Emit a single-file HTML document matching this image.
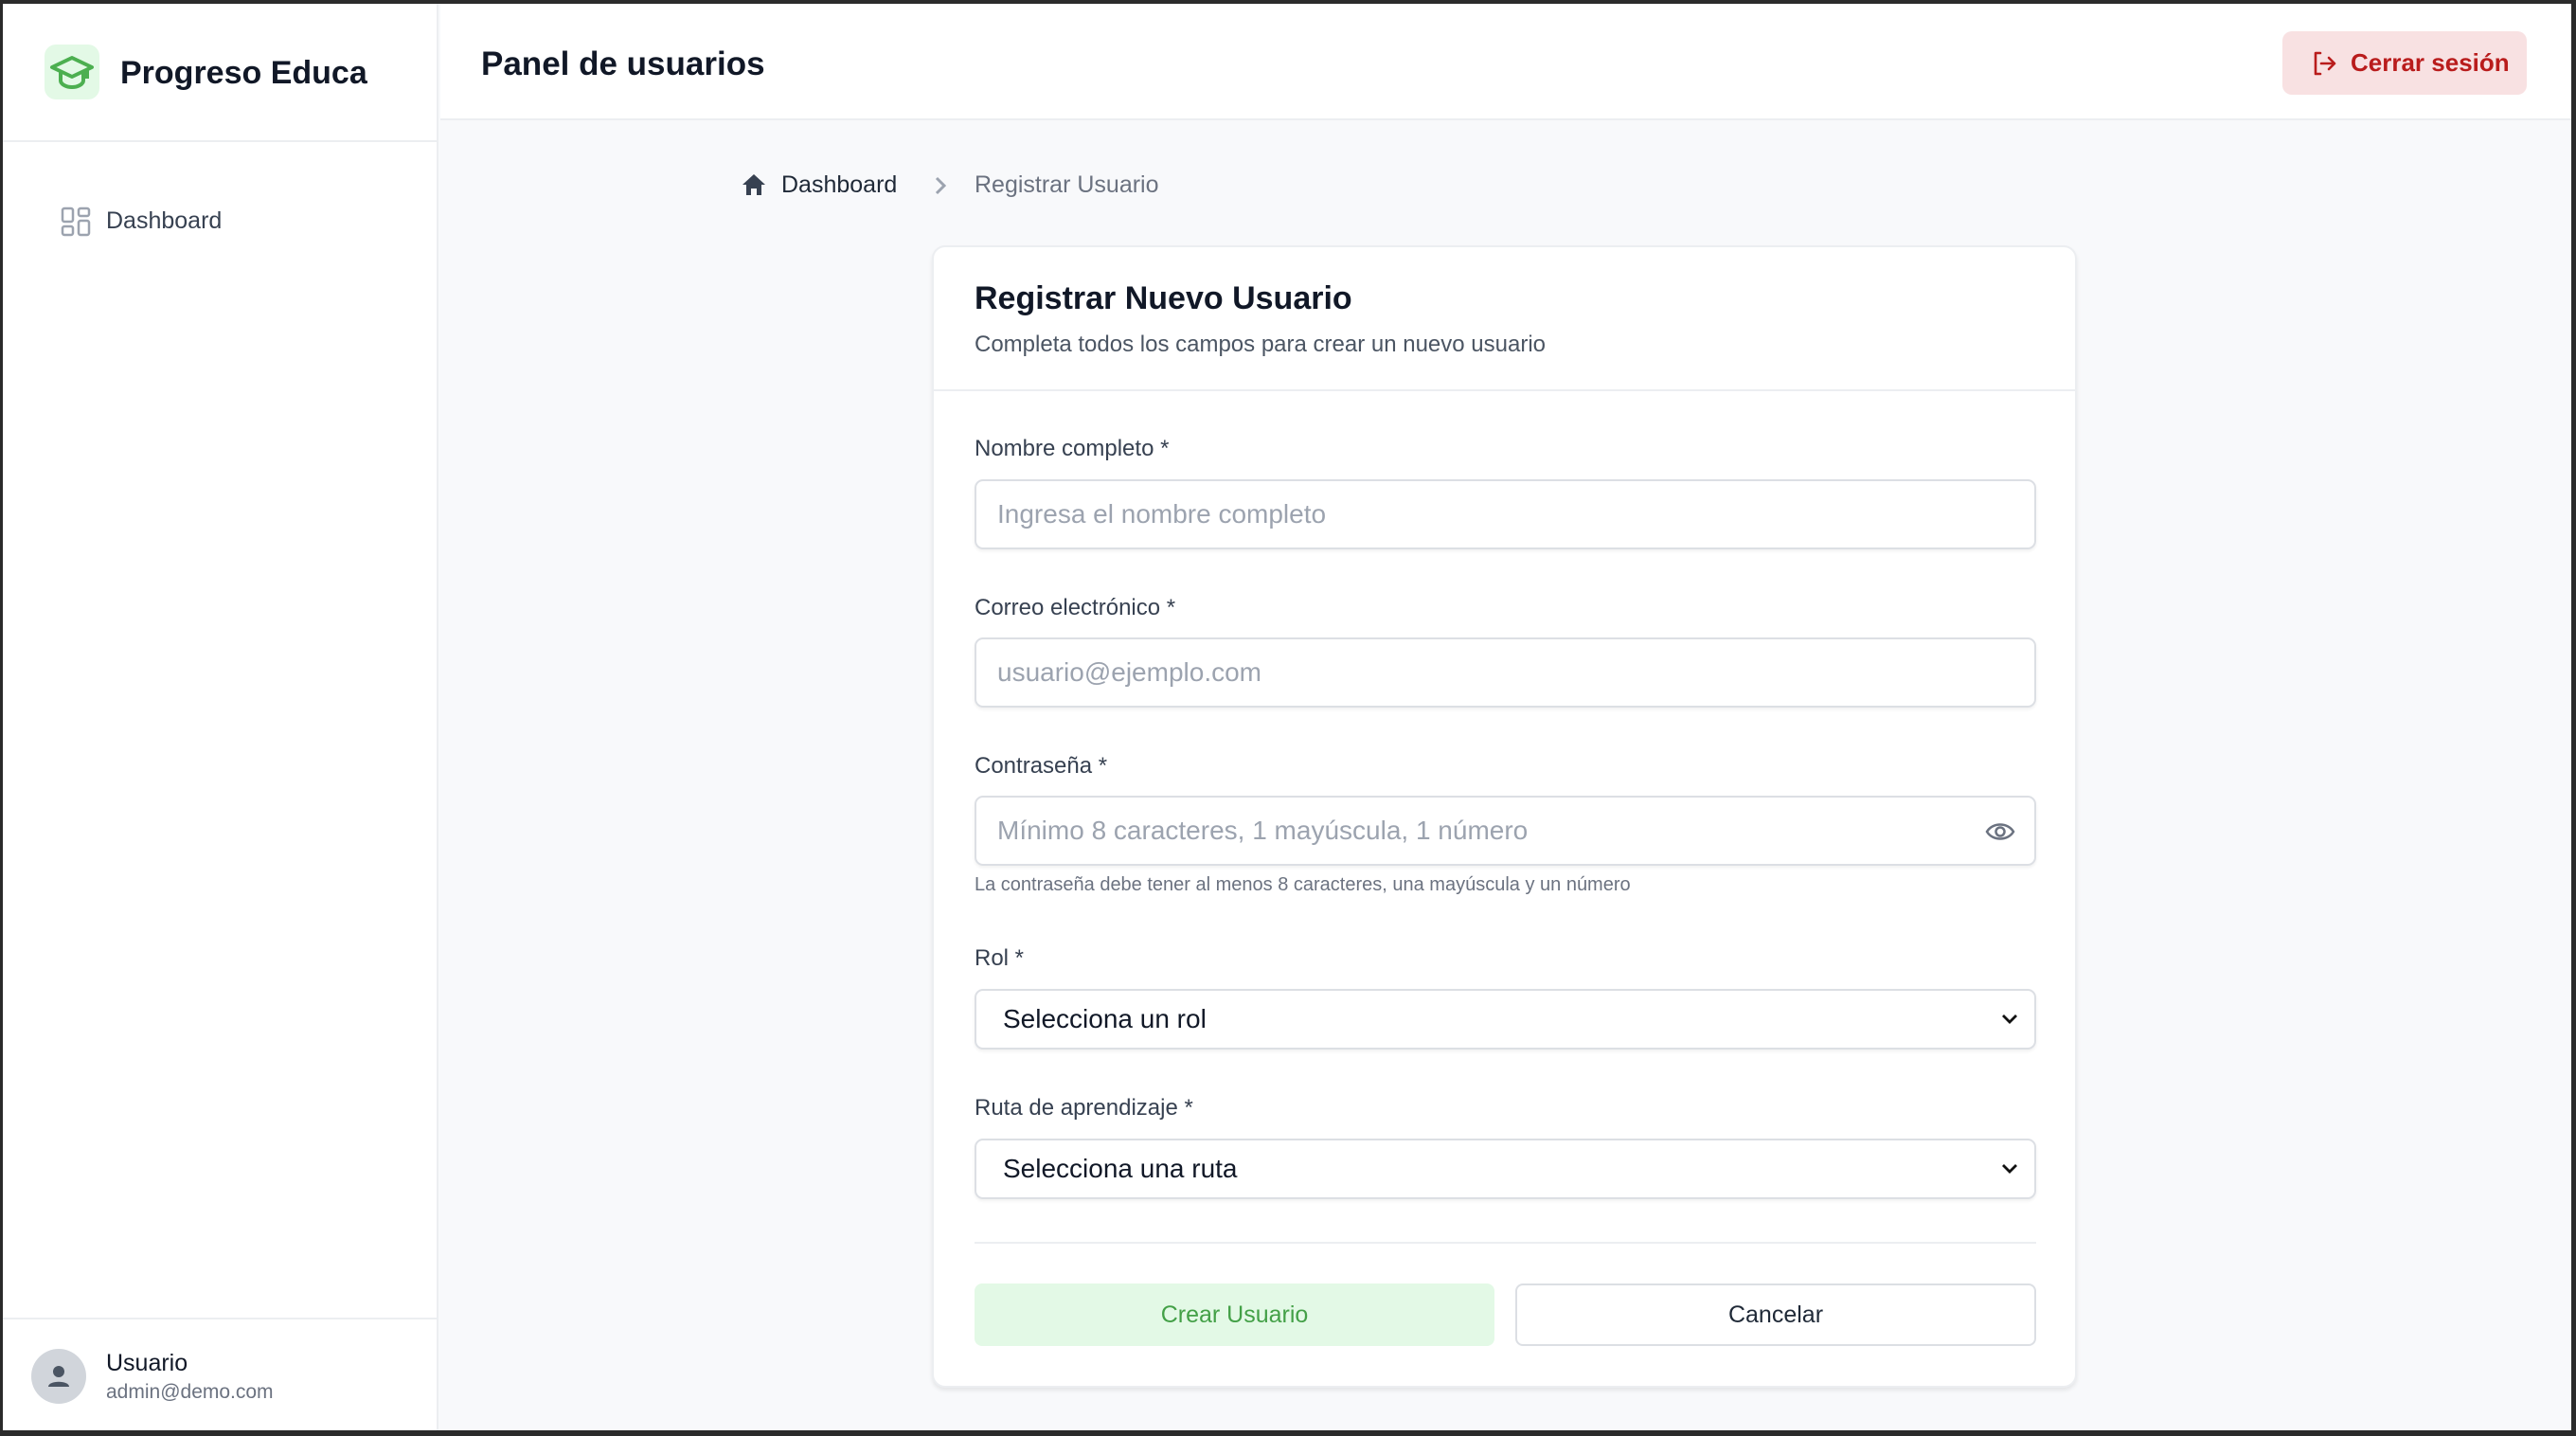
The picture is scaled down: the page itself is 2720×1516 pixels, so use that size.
<!DOCTYPE html>
<html><head><meta charset="utf-8"><style>
*{box-sizing:border-box;margin:0;padding:0}
body{width:2720px;height:1516px;background:#2b2b2b;font-family:"Liberation Sans",sans-serif;position:relative;overflow:hidden;color:#111827}
.frame{position:absolute;left:3px;top:4px;width:2712px;height:1506px;background:#f8f9fb;overflow:hidden}
.side{position:absolute;left:0;top:0;width:460px;height:1506px;background:#fff;border-right:2px solid #eceef1}
.hdr{position:absolute;left:462px;top:0;right:0;height:123px;background:#fff;border-bottom:2px solid #eceef1}
.abs{position:absolute;white-space:nowrap}
.card{position:absolute;left:981px;top:256px;width:1209px;height:1206px;background:#fff;border:2px solid #eceef1;border-radius:14px;box-shadow:0 3px 4px rgba(0,0,0,.08)}
.lbl{position:absolute;left:43px;font-size:24px;color:#374151}
.inp{position:absolute;left:43px;width:1121px;height:74px;border:2px solid #dcdfe4;border-radius:9px;box-shadow:0 2px 3px rgba(0,0,0,.06);font-size:28px;color:#9ca3af;padding-left:22px;display:flex;align-items:center}
.sel{color:#111827;padding-left:28px;height:64px}
.chev{position:absolute;right:16px;top:22px}
</style></head><body>
<div class="frame">
 <div class="side">
  <div class="abs" style="left:44px;top:43px;width:58px;height:58px;background:#e3f9e6;border-radius:12px">
   <svg width="58" height="58" viewBox="0 0 58 58"><path d="M8 24 L29 14 L50 24 L29 34 Z" fill="none" stroke="#4caf50" stroke-width="4" stroke-linejoin="round"/><path d="M17 29 V38 C17 42 23 45 29 45 C35 45 41 42 41 38 V29" fill="none" stroke="#4caf50" stroke-width="4"/><path d="M45 26 V36" stroke="#4caf50" stroke-width="4"/></svg>
  </div>
  <div class="abs" style="left:124px;top:54px;font-size:34px;font-weight:600;color:#111827">Progreso Educa</div>
  <div class="abs" style="left:0;top:144px;width:460px;border-top:2px solid #eceef1"></div>
  <svg class="abs" style="left:61px;top:214px" width="32" height="32" viewBox="0 0 32 32" fill="none" stroke="#9ca3af" stroke-width="2.5"><rect x="2" y="2" width="11" height="14" rx="2"/><rect x="19" y="2" width="11" height="8" rx="2"/><rect x="2" y="21" width="11" height="9" rx="2"/><rect x="19" y="15" width="11" height="15" rx="2"/></svg>
  <div class="abs" style="left:109px;top:215px;font-size:25px;color:#374151">Dashboard</div>
  <div class="abs" style="left:0;top:1387px;width:460px;border-top:2px solid #eceef1"></div>
  <div class="abs" style="left:30px;top:1420px;width:58px;height:58px;border-radius:50%;background:#d1d5db;overflow:hidden">
   <svg width="58" height="58" viewBox="0 0 58 58"><circle cx="29" cy="24" r="6" fill="#4b5563"/><path d="M18 40 C18 33 40 33 40 40 Z" fill="#4b5563"/></svg>
  </div>
  <div class="abs" style="left:109px;top:1421px;font-size:25px;color:#111827">Usuario</div>
  <div class="abs" style="left:109px;top:1454px;font-size:21px;color:#6b7280">admin@demo.com</div>
 </div>
 <div class="hdr">
  <div class="abs" style="left:43px;top:44px;font-size:35px;font-weight:600;color:#111827">Panel de usuarios</div>
  <div class="abs" style="left:1945px;top:29px;width:258px;height:67px;background:#f8e1e2;border-radius:10px">
   <svg class="abs" style="left:30px;top:20px" width="28" height="28" viewBox="0 0 28 28" fill="none" stroke="#b91c1c" stroke-width="2.6" stroke-linecap="round" stroke-linejoin="round"><path d="M10 3 H5 V25 H10"/><path d="M11 14 H25 M19 8 L25 14 L19 20"/></svg>
   <div class="abs" style="left:72px;top:18px;font-size:26px;font-weight:600;color:#b91c1c">Cerrar sesión</div>
  </div>
 </div>
 <svg class="abs" style="left:780px;top:178px" width="26" height="26" viewBox="0 0 26 26"><path d="M13 2 L25 13 H21 V24 H16 V17 H10 V24 H5 V13 H1 Z" fill="#374151"/></svg>
 <div class="abs" style="left:822px;top:177px;font-size:25px;color:#1f2937">Dashboard</div>
 <svg class="abs" style="left:982px;top:181px" width="16" height="22" viewBox="0 0 16 22"><path d="M4 3 L12 11 L4 19" fill="none" stroke="#9ca3af" stroke-width="3"/></svg>
 <div class="abs" style="left:1026px;top:177px;font-size:25px;color:#6b7280">Registrar Usuario</div>
 <div class="card" style="top:255px">
  <div class="abs" style="left:43px;top:35px;font-size:34px;font-weight:600;color:#111827">Registrar Nuevo Usuario</div>
  <div class="abs" style="left:43px;top:89px;font-size:24px;color:#4b5563">Completa todos los campos para crear un nuevo usuario</div>
  <div class="abs" style="left:0;top:150px;width:1205px;border-top:2px solid #eceef1"></div>
  <div class="lbl" style="top:199px">Nombre completo *</div>
  <div class="inp" style="top:245px">Ingresa el nombre completo</div>
  <div class="lbl" style="top:367px">Correo electrónico *</div>
  <div class="inp" style="top:412px">usuario@ejemplo.com</div>
  <div class="lbl" style="top:534px">Contraseña *</div>
  <div class="inp" style="top:579px">Mínimo 8 caracteres, 1 mayúscula, 1 número
   <svg class="chev" style="top:23px;right:20px" width="32" height="26" viewBox="0 0 32 26" fill="none" stroke="#6b7280" stroke-width="2.5"><path d="M2 13 C8 3 24 3 30 13 C24 23 8 23 2 13 Z"/><circle cx="16" cy="13" r="4.5"/></svg>
  </div>
  <div class="abs" style="left:43px;top:662px;font-size:20px;color:#6b7280">La contraseña debe tener al menos 8 caracteres, una mayúscula y un número</div>
  <div class="lbl" style="top:737px">Rol *</div>
  <div class="inp sel" style="top:783px">Selecciona un rol
   <svg class="chev" width="20" height="16" viewBox="0 0 20 16"><path d="M3 4 L10 11 L17 4" fill="none" stroke="#111" stroke-width="2.8"/></svg></div>
  <div class="lbl" style="top:895px">Ruta de aprendizaje *</div>
  <div class="inp sel" style="top:941px">Selecciona una ruta
   <svg class="chev" width="20" height="16" viewBox="0 0 20 16"><path d="M3 4 L10 11 L17 4" fill="none" stroke="#111" stroke-width="2.8"/></svg></div>
  <div class="abs" style="left:43px;top:1050px;width:1121px;border-top:2px solid #eceef1"></div>
  <div class="abs" style="left:43px;top:1094px;width:549px;height:66px;background:#e3f9e6;border-radius:8px;font-size:25px;color:#43a047;display:flex;align-items:center;justify-content:center">Crear Usuario</div>
  <div class="abs" style="left:614px;top:1094px;width:550px;height:66px;background:#fff;border:2px solid #dcdfe4;border-radius:8px;font-size:25px;color:#1f2937;display:flex;align-items:center;justify-content:center">Cancelar</div>
 </div>
</div>
</body></html>
